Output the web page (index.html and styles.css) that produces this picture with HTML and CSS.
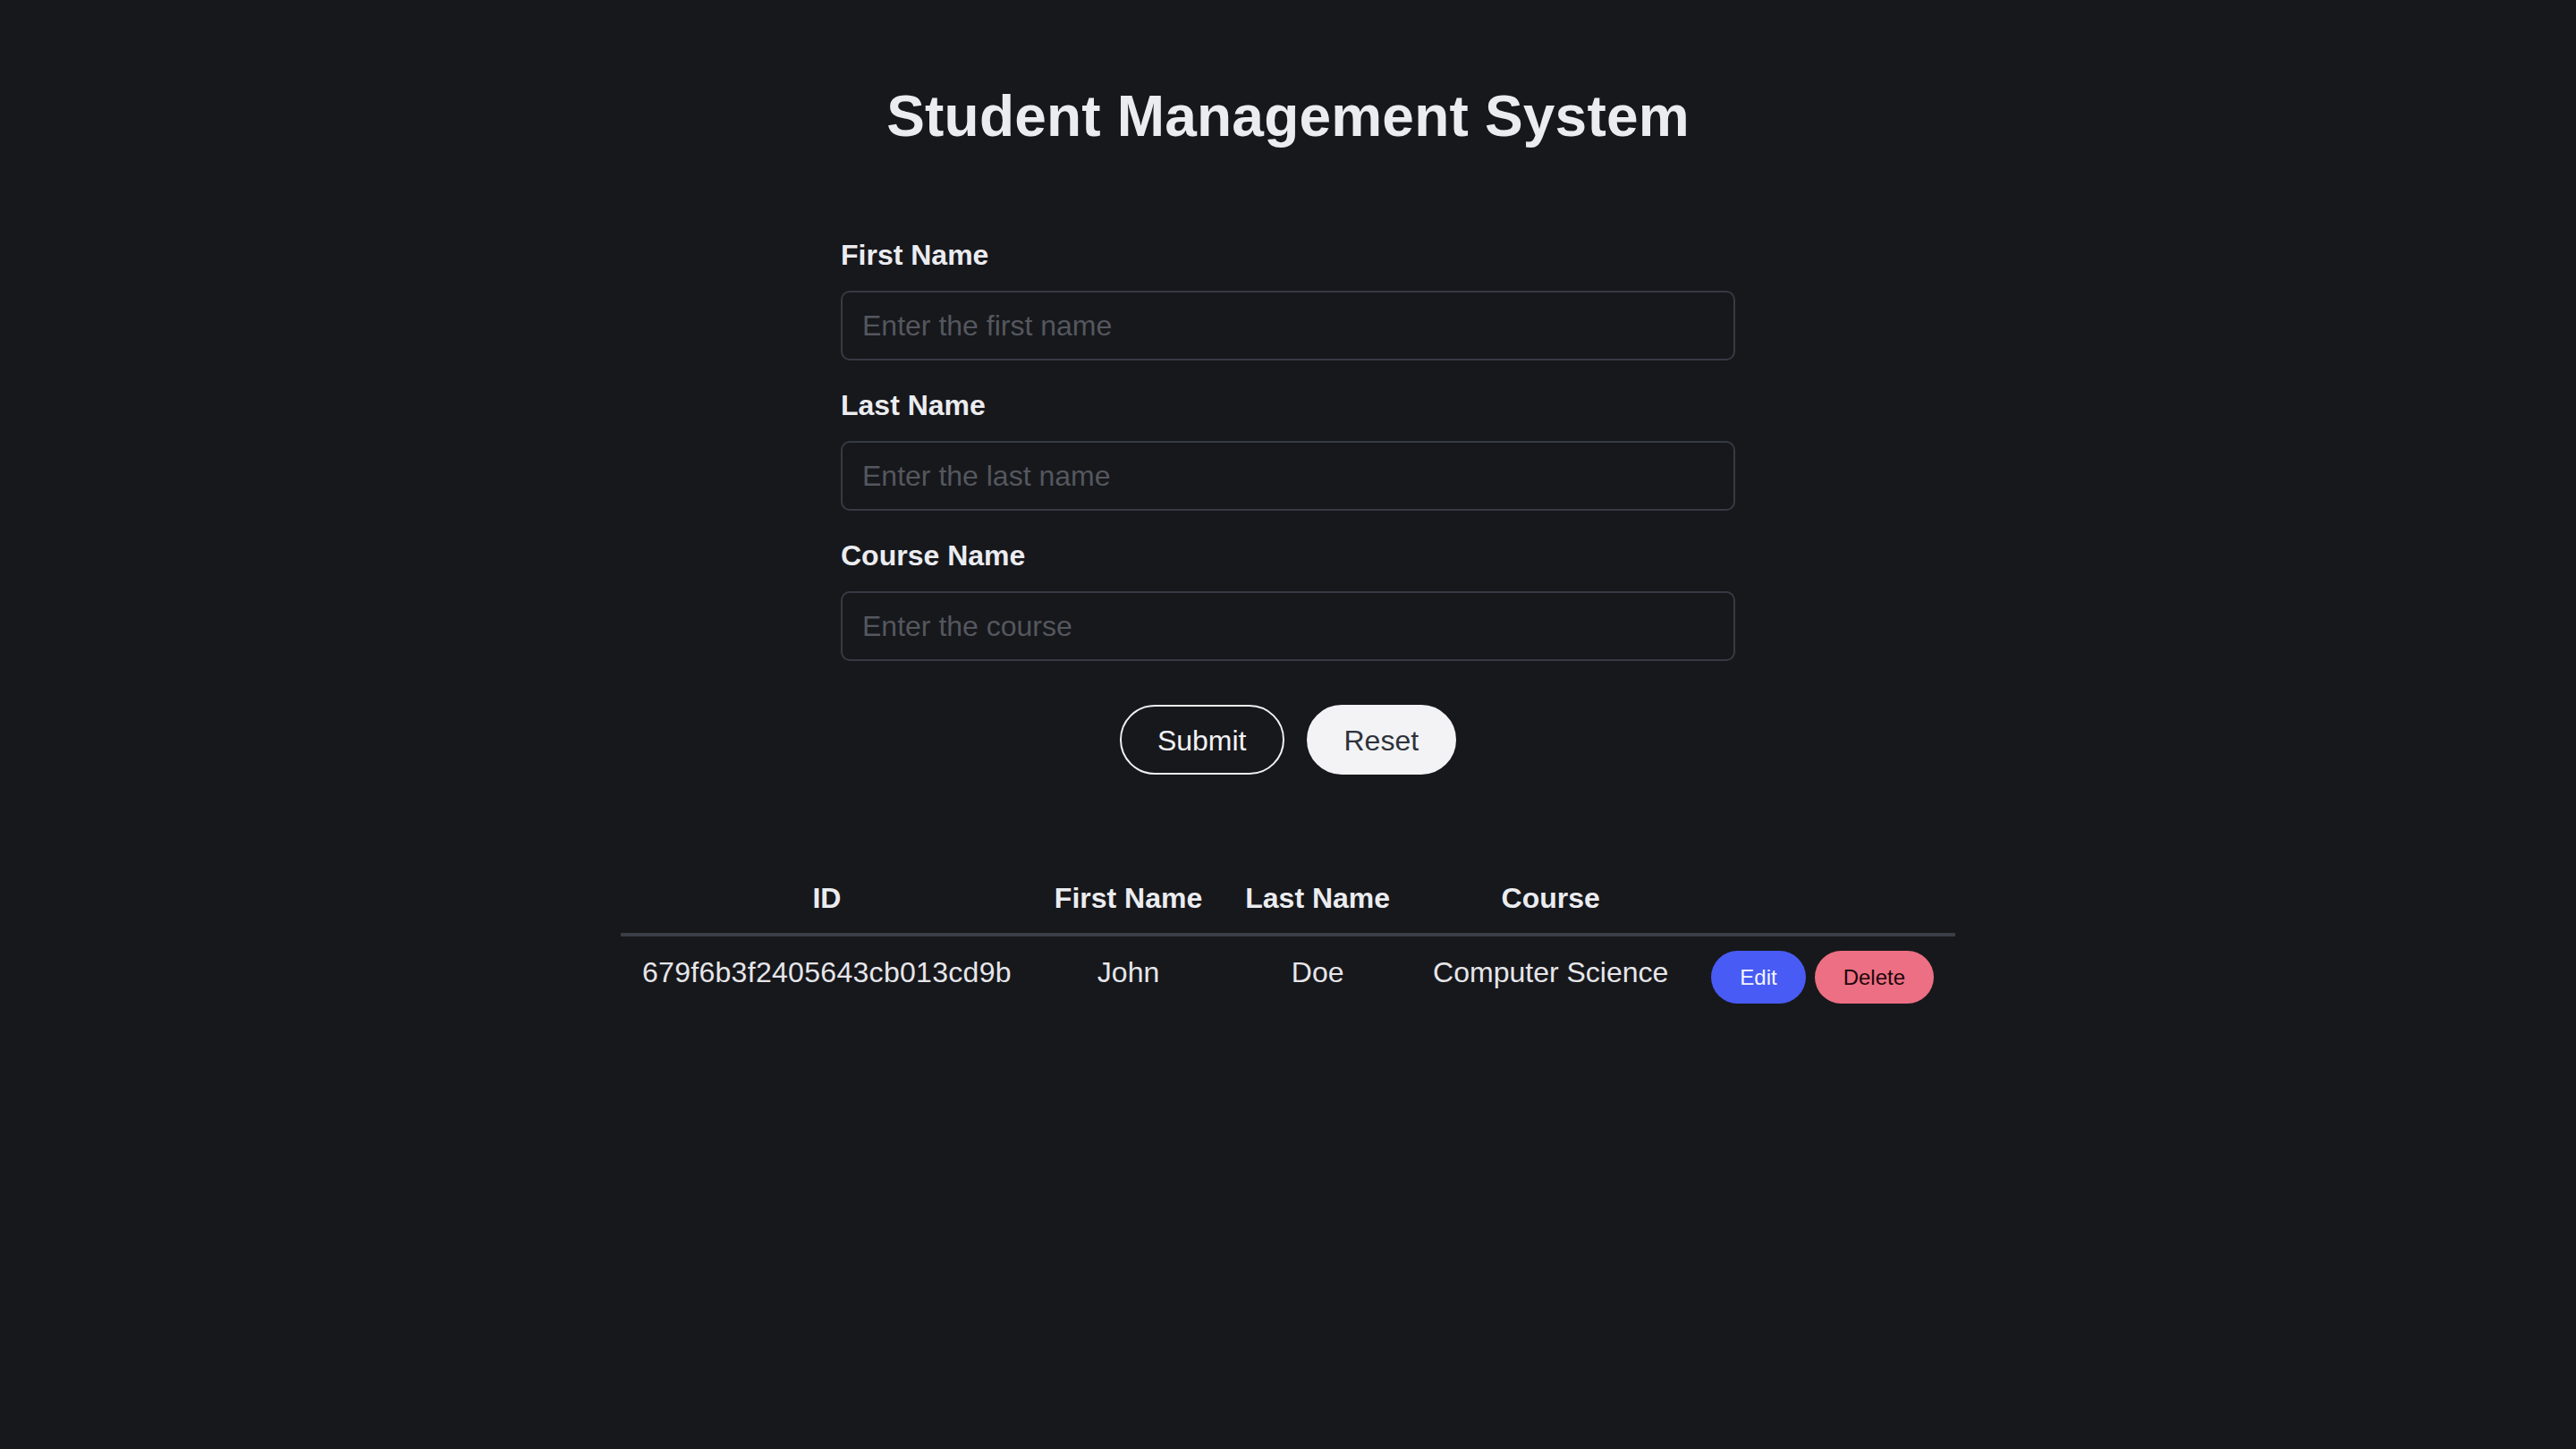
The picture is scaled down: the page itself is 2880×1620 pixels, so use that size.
FILE: index.html
```html
<!DOCTYPE html>
<html lang="en">
<head>
<meta charset="utf-8">
<title>Student Management System</title>
<link rel="stylesheet" href="styles.css">
</head>
<body>
<main class="page">
  <h1 class="title">Student Management System</h1>
  <form class="form">
    <div class="field">
      <label class="label" for="first">First Name</label>
      <input class="input" id="first" type="text" placeholder="Enter the first name">
    </div>
    <div class="field">
      <label class="label" for="last">Last Name</label>
      <input class="input" id="last" type="text" placeholder="Enter the last name">
    </div>
    <div class="field">
      <label class="label" for="course">Course Name</label>
      <input class="input" id="course" type="text" placeholder="Enter the course">
    </div>
    <div class="actions">
      <button type="button" class="btn btn-submit">Submit</button>
      <button type="button" class="btn btn-reset">Reset</button>
    </div>
  </form>
  <table class="table">
    <thead>
      <tr>
        <th>ID</th>
        <th>First Name</th>
        <th>Last Name</th>
        <th>Course</th>
        <th></th>
      </tr>
    </thead>
    <tbody>
      <tr>
        <td class="cell-id">679f6b3f2405643cb013cd9b</td>
        <td>John</td>
        <td>Doe</td>
        <td>Computer Science</td>
        <td class="cell-actions">
          <div class="row-actions">
            <button type="button" class="pill pill-edit">Edit</button>
            <button type="button" class="pill pill-delete">Delete</button>
          </div>
        </td>
      </tr>
    </tbody>
  </table>
</main>
</body>
</html>
```
FILE: styles.css
```css
* {
  box-sizing: border-box;
}

html, body {
  margin: 0;
  padding: 0;
  background: #17181c;
  min-height: 100%;
}

body {
  font-family: "Liberation Sans", Arial, Helvetica, sans-serif;
  color: #ebecf0;
  min-height: 1620px;
}

.page {
  display: flex;
  flex-direction: column;
  align-items: center;
  padding-top: 94px;
}

.title {
  margin: 0;
  font-size: 64px;
  line-height: 72px;
  font-weight: 700;
  color: #ebecf0;
  letter-spacing: 0.2px;
}

.form {
  width: 1000px;
  margin-top: 101px;
  display: flex;
  flex-direction: column;
}

.field {
  display: flex;
  flex-direction: column;
  margin-bottom: 32px;
}

.label {
  font-size: 32px;
  line-height: 36px;
  font-weight: 700;
  color: #ebecf0;
  margin-bottom: 22px;
}

.input {
  height: 78px;
  border: 2px solid #363a43;
  border-radius: 10px;
  background: #17181c;
  padding: 0 22px;
  font-family: inherit;
  font-size: 32px;
  color: #ebecf0;
  outline: none;
}

.input::placeholder {
  color: #54575e;
}

.actions {
  display: flex;
  justify-content: center;
  gap: 25px;
  margin-top: 17px;
}

.btn {
  height: 78px;
  padding: 2px 40px 0;
  border-radius: 39px;
  border: 2px solid #f0f0f2;
  font-family: inherit;
  font-size: 32px;
  display: inline-flex;
  align-items: center;
  justify-content: center;
  cursor: pointer;
}

.btn-submit {
  background: transparent;
  color: #f2f2f4;
}

.btn-reset {
  background: #f3f3f5;
  border-color: #f3f3f5;
  color: #2e323b;
}

.table {
  margin-top: 104px;
  border-collapse: collapse;
  font-size: 32px;
  line-height: 36px;
}

.table th {
  font-weight: 700;
  color: #ebecf0;
  padding: 16px 24px 21px;
  text-align: center;
  border-bottom: 4px solid #3b3e47;
}

.table td {
  vertical-align: top;
  text-align: center;
  padding: 22px 24px;
  color: #e6e6ea;
  white-space: nowrap;
}

.table td.cell-id {
  letter-spacing: 0.3px;
}

.table td.cell-actions {
  padding-top: 16px;
}

.row-actions {
  display: flex;
  gap: 10px;
}

.pill {
  height: 59px;
  padding: 1px 32px 0;
  border: none;
  border-radius: 30px;
  font-family: inherit;
  font-size: 24px;
  display: inline-flex;
  align-items: center;
  cursor: pointer;
}

.pill-edit {
  background: #485bf4;
  color: #f4f5ff;
}

.pill-delete {
  background: #ed6f83;
  color: #1b0609;
}
```
